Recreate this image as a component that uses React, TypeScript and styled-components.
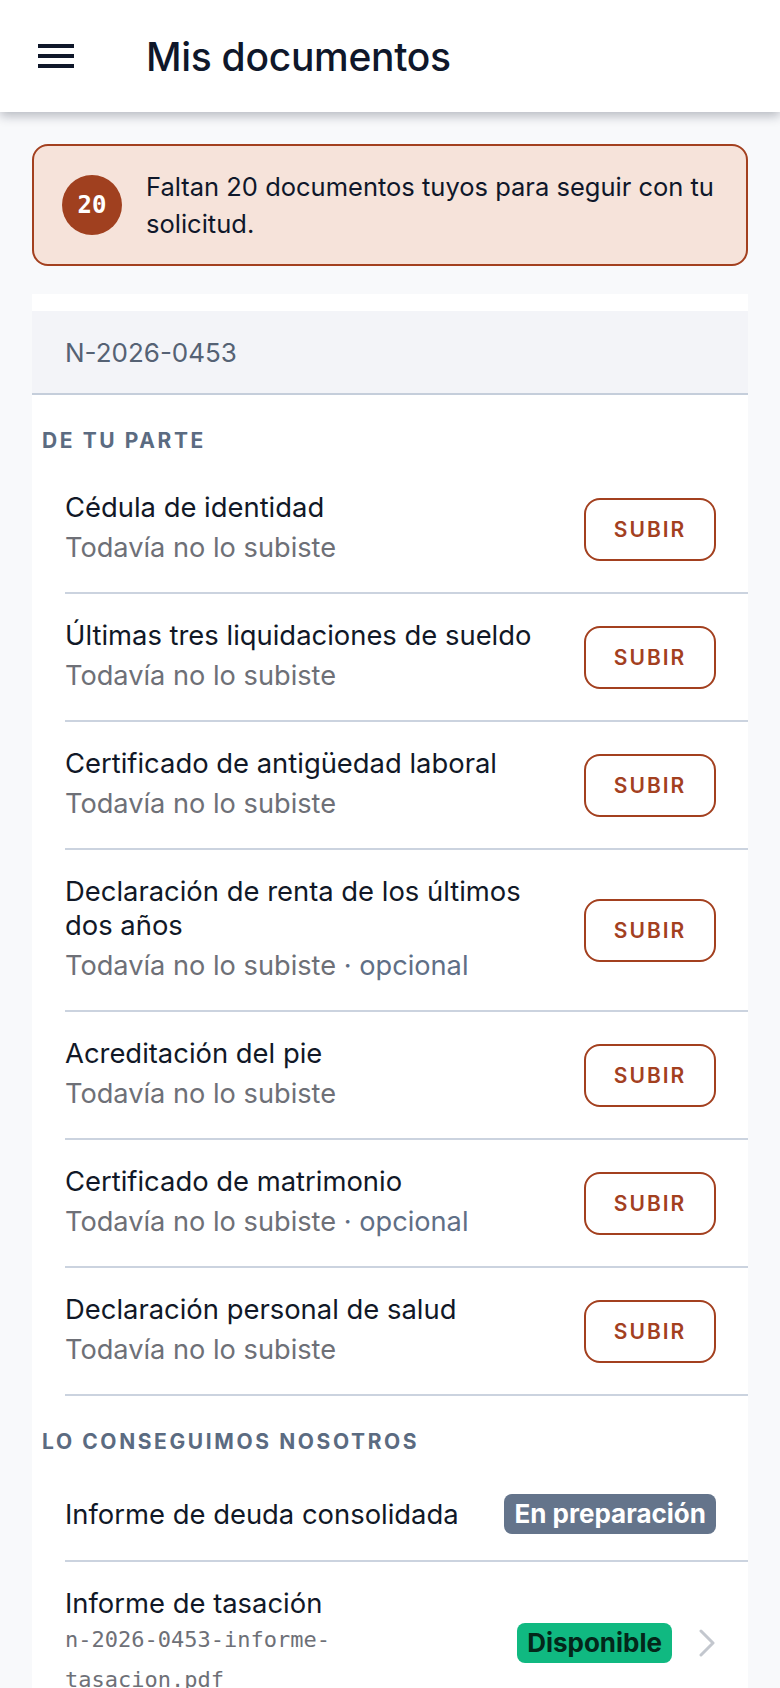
import React from "react";
import styled, { createGlobalStyle } from "styled-components";

const GlobalStyle = createGlobalStyle`
  * { box-sizing: border-box; }
  body {
    margin: 0;
    background: #f8f9fb;
    font-family: Inter, "Noto Sans", sans-serif;
    color: #111827;
  }
`;

type Doc = {
  title: string;
  optional?: boolean;
};

const myDocs: Doc[] = [
  { title: "Cédula de identidad" },
  { title: "Últimas tres liquidaciones de sueldo" },
  { title: "Certificado de antigüedad laboral" },
  { title: "Declaración de renta de los últimos dos años", optional: true },
  { title: "Acreditación del pie" },
  { title: "Certificado de matrimonio", optional: true },
  { title: "Declaración personal de salud" },
];

function MenuIcon() {
  return (
    <svg width="48" height="48" viewBox="0 0 24 24" fill="#0f172a">
      <path d="M3 18h18v-2H3v2zm0-5h18v-2H3v2zm0-7v2h18V6H3z" />
    </svg>
  );
}

function Chevron() {
  return (
    <svg width="18" height="28" viewBox="0 0 18 28" fill="none">
      <path d="M3 2l12 12-12 12" stroke="#c3c7ce" strokeWidth="3" strokeLinecap="round" strokeLinejoin="round" />
    </svg>
  );
}

export default function App() {
  return (
    <>
      <GlobalStyle />
      <TopBar>
        <MenuButton aria-label="menu">
          <MenuIcon />
        </MenuButton>
        <PageTitle>Mis documentos</PageTitle>
      </TopBar>

      <Main>
        <Alert>
          <CountBadge>20</CountBadge>
          <AlertText>Faltan 20 documentos tuyos para seguir con tu solicitud.</AlertText>
        </Alert>

        <Card>
          <CaseHeader>N-2026-0453</CaseHeader>

          <SectionLabel>De tu parte</SectionLabel>
          {myDocs.map((doc) => (
            <DocRow key={doc.title}>
              <DocInfo>
                <DocTitle>{doc.title}</DocTitle>
                <DocStatus>
                  Todavía no lo subiste
                  {doc.optional && <Optional> · opcional</Optional>}
                </DocStatus>
              </DocInfo>
              <UploadButton>Subir</UploadButton>
            </DocRow>
          ))}

          <SectionLabel>Lo conseguimos nosotros</SectionLabel>
          <DocRow>
            <DocInfo>
              <DocTitle>Informe de deuda consolidada</DocTitle>
            </DocInfo>
            <RowEnd>
              <Tag $tone="pending">En preparación</Tag>
            </RowEnd>
          </DocRow>
          <DocRow>
            <DocInfo>
              <DocTitle>Informe de tasación</DocTitle>
              <FileName>n-2026-0453-informe-tasacion.pdf</FileName>
            </DocInfo>
            <RowEnd>
              <Tag $tone="ready">Disponible</Tag>
              <Chevron />
            </RowEnd>
          </DocRow>
        </Card>
      </Main>
    </>
  );
}

const TopBar = styled.header`
  position: relative;
  z-index: 1;
  height: 112px;
  display: flex;
  align-items: center;
  padding-left: 32px;
  background: #ffffff;
  box-shadow: 0 4px 10px rgba(15, 23, 42, 0.28);
`;

const MenuButton = styled.button`
  display: flex;
  padding: 0;
  border: 0;
  background: none;
  width: 48px;
  height: 48px;
`;

const PageTitle = styled.h1`
  margin: 0 0 0 66px;
  font-size: 39px;
  font-weight: 500;
  letter-spacing: -0.3px;
  color: #0f172a;
`;

const Main = styled.main`
  padding: 32px 32px 48px;
`;

const Alert = styled.div`
  display: flex;
  align-items: center;
  gap: 24px;
  padding: 22px 24px 22px 28px;
  background: #f6e3da;
  border: 2px solid #a3401f;
  border-radius: 16px;
`;

const CountBadge = styled.div`
  flex: none;
  width: 60px;
  height: 60px;
  border-radius: 50%;
  background: #a0401f;
  color: #ffffff;
  display: flex;
  align-items: center;
  justify-content: center;
  font-family: "DejaVu Sans Mono", monospace;
  font-size: 24px;
  font-weight: 700;
`;

const AlertText = styled.p`
  margin: 0;
  font-size: 25.5px;
  line-height: 37px;
  color: #0f172a;
`;

const Card = styled.section`
  margin-top: 28px;
  padding-top: 17px;
  background: #ffffff;
`;

const CaseHeader = styled.div`
  height: 84px;
  display: flex;
  align-items: center;
  padding-left: 33px;
  background: #f3f4f8;
  border-bottom: 2px solid #c5cedb;
  font-size: 26px;
  color: #556274;
`;

const SectionLabel = styled.h2`
  margin: 0;
  padding: 30px 0 9px 10px;
  font-size: 21px;
  line-height: 32px;
  font-weight: 700;
  letter-spacing: 2.6px;
  text-transform: uppercase;
  color: #5b6b81;
`;

const DocRow = styled.div`
  margin-left: 33px;
  padding: 24px 32px 24px 0;
  display: flex;
  align-items: center;
  justify-content: space-between;
  gap: 32px;
  border-bottom: 2px solid #cbd3df;
`;

const DocInfo = styled.div`
  flex: 1;
  min-width: 0;
`;

const DocTitle = styled.div`
  font-size: 27.4px;
  line-height: 34px;
  color: #111827;
`;

const DocStatus = styled.div`
  margin-top: 4px;
  font-size: 27.2px;
  line-height: 40px;
  color: #6e7077;
`;

const Optional = styled.span`
  color: #5f6f86;
`;

const FileName = styled.div`
  font-family: "DejaVu Sans Mono", monospace;
  font-size: 22px;
  line-height: 40px;
  color: #6e7077;
  word-break: break-word;
`;

const UploadButton = styled.button`
  flex: none;
  width: 132px;
  height: 63px;
  border: 2px solid #a3401f;
  border-radius: 16px;
  background: #ffffff;
  color: #a3401f;
  font-family: Inter, sans-serif;
  font-size: 21px;
  font-weight: 600;
  letter-spacing: 2px;
  text-transform: uppercase;
`;

const RowEnd = styled.div`
  flex: none;
  min-height: 45px;
  display: flex;
  align-items: center;
  gap: 26px;
`;

const Tag = styled.span<{ $tone: "pending" | "ready" }>`
  display: inline-block;
  padding: 0 10px;
  height: 40px;
  line-height: 40px;
  border-radius: 8px;
  font-size: 26px;
  font-weight: 700;
  background: ${({ $tone }) => ($tone === "ready" ? "#10b981" : "#64748b")};
  color: ${({ $tone }) => ($tone === "ready" ? "#03271a" : "#ffffff")};
`;
